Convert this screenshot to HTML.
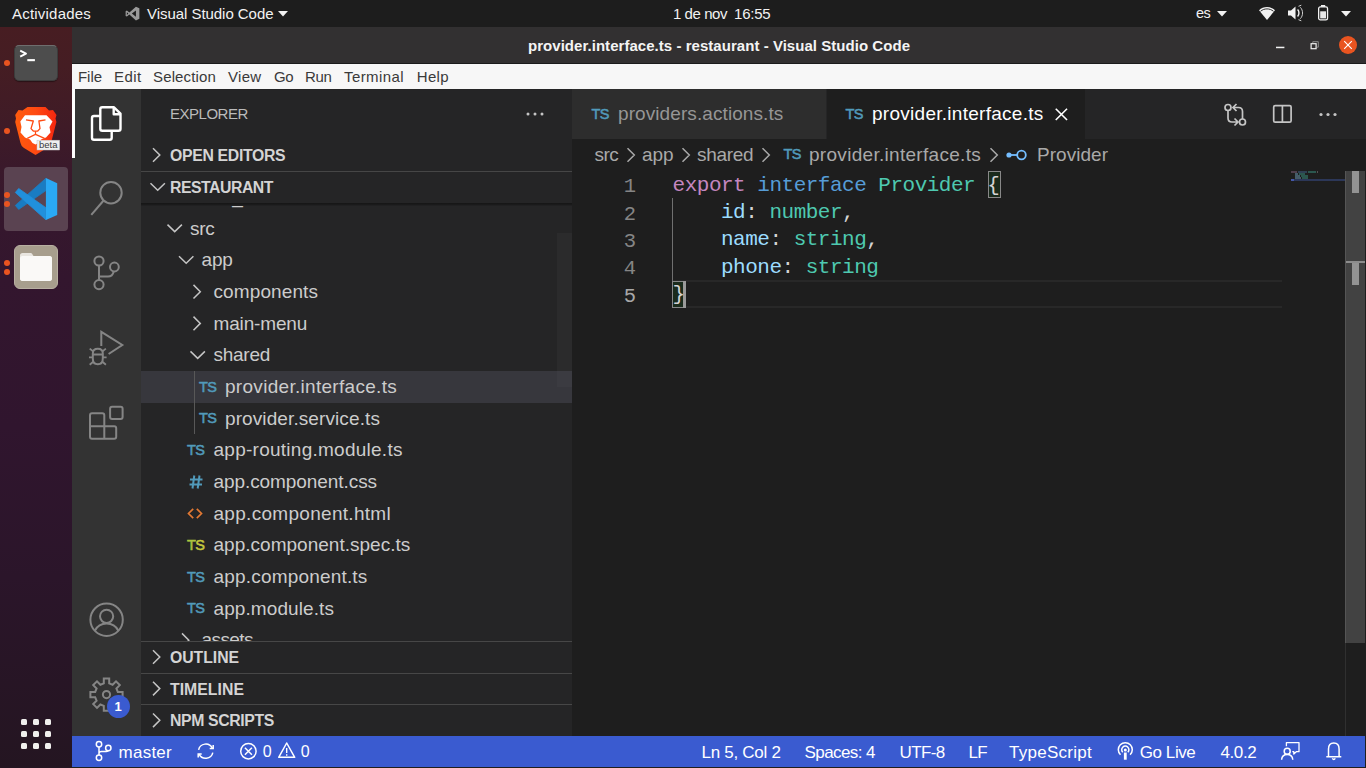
<!DOCTYPE html>
<html>
<head>
<meta charset="utf-8">
<title>provider.interface.ts - restaurant - Visual Studio Code</title>
<style>
*{box-sizing:border-box;margin:0;padding:0}
html,body{width:1366px;height:768px;overflow:hidden;background:#1e1e1e;font-family:"Liberation Sans",sans-serif;}
body{position:relative}
.abs{position:absolute}
.t{position:absolute;white-space:nowrap;line-height:1}
/* top bar */
#topbar{left:0;top:0;width:1366px;height:27px;background:#1d1d1d}
#topbar .t{color:#f2f2f2;font-size:15px;top:6px}
/* dock */
#dock{left:0;top:27px;width:72px;height:741px;background:linear-gradient(180deg,#471d22 0px,#451d23 40px,#3f1b27 100px,#3a192b 140px,#35172d 200px,#33162e 250px,#30152e 400px,#2b152a 550px,#241521 741px)}
.dot{position:absolute;width:6px;height:6px;border-radius:3px;background:#e95420;left:4px}
/* window */
#titlebar{left:72px;top:27px;width:1294px;height:37px;background:#323031;border-bottom:1px solid #1b1b1b}
#titlebar .t{color:#f4f4f4;font-weight:bold;font-size:15px;top:11px}
#menubar{left:72px;top:64px;width:1294px;height:25px;background:#f7f7f7}
#menubar .t{color:#3a3a3a;font-size:15px;top:5px}
#actbar{left:72px;top:89px;width:69px;height:647px;background:#333333}
#sidebar{left:141px;top:89px;width:431px;height:647px;background:#252526;overflow:hidden}
#editor{left:572px;top:89px;width:794px;height:647px;background:#1e1e1e;overflow:hidden}
#status{left:72px;top:736px;width:1293px;height:31px;background:#3a5bd0}
#status .t{color:#ffffff;font-size:17px;top:7.8px}
/* sidebar */
.row{position:absolute;left:0;width:431px;height:32px}
.row .t{color:#cccccc;font-size:19px;top:6px}
.hdr{position:absolute;left:0;width:431px;height:32px;background:#252526;border-top:1px solid #474747}
.hdr .t{color:#d4d4d4;font-weight:bold;font-size:15.8px;left:29px;top:8px}
.ts{position:absolute;font-weight:normal;-webkit-text-stroke:0.55px currentColor;font-size:14.5px;color:#519aba;line-height:1;letter-spacing:-0.5px}
/* code */
.ln{position:absolute;margin-top:2.2px;left:0;width:64px;text-align:right;font-family:"Liberation Mono",monospace;font-size:20.5px;color:#858585;line-height:27.36px;height:27.36px}
.cl{position:absolute;margin-top:0.7px;left:100.6px;font-family:"Liberation Mono",monospace;font-size:21px;line-height:27.36px;height:27.36px;white-space:pre;color:#d4d4d4;letter-spacing:-0.5px}
.k1{color:#c586c0}.k2{color:#569cd6}.k3{color:#4ec9b0}.k4{color:#9cdcfe}
svg{position:absolute;overflow:visible}
</style>
</head>
<body>
<!-- TOPBAR -->
<div id="topbar" class="abs">
  <span class="t" id="tb1" style="left:12px;letter-spacing:0.207px">Actividades</span>
  <svg id="tbvs" style="left:125px;top:6px" width="15" height="15" viewBox="0 0 24 24"><path d="M17.5 1 L23 3.5 V20.5 L17.5 23 L7 13.5 L3 16.8 L1 15.8 V8.2 L3 7.2 L7 10.5 Z M17.5 7 L11 12 L17.5 17 Z M3 9.8 V14.2 L5.4 12 Z" fill="#9a9a9a" fill-rule="evenodd"/></svg>
  <span class="t" id="tb2" style="left:147px;letter-spacing:-0.045px">Visual Studio Code</span>
  <svg style="left:278px;top:10.800px" width="10" height="5.400" viewBox="0 0 10 6" preserveAspectRatio="none"><path d="M0 0H10L5 6Z" fill="#f2f2f2"/></svg>
  <span class="t" id="tb3" style="left:673px;letter-spacing:-0.443px">1 de nov</span><span class="t" id="tb3b" style="left:734px;letter-spacing:-0.209px">16:55</span>
  <span class="t" id="tb4" style="left:1196px;font-size:14.500px;letter-spacing:-0.5px">es</span>
  <svg style="left:1217px;top:10.800px" width="10" height="5.400" viewBox="0 0 10 6" preserveAspectRatio="none"><path d="M0 0H10L5 6Z" fill="#f2f2f2"/></svg>
  <svg style="left:1259px;top:6.600px" width="16" height="13" viewBox="0 0 16 13"><path d="M8 13 L0 3.200 C2.200 1.200 5 0 8 0 C11 0 13.800 1.200 16 3.200 Z" fill="#f2f2f2"/><path d="M1.500 4.300 C3.400 2.700 5.600 1.900 8 1.900 C10.400 1.900 12.600 2.700 14.500 4.300" fill="none" stroke="#1d1d1d" stroke-width="0.900"/></svg>
  <svg style="left:1287.500px;top:5px" width="17" height="16" viewBox="0 0 17 16"><path d="M0 5.500 H3 L7.500 1.500 V14.500 L3 10.500 H0 Z" fill="#f2f2f2"/><path d="M9.600 4.600 C11.400 6.400 11.400 9.600 9.600 11.400" fill="none" stroke="#f2f2f2" stroke-width="1.400"/><path d="M10.500 1.300 L13.300 0.200 M10.500 14.700 L13.300 15.800 M12.300 2.300 C15.300 5.300 15.300 10.700 12.300 13.700" fill="none" stroke="#e0e0e0" stroke-width="0.900"/></svg>
  <svg style="left:1318px;top:4.700px" width="10.200" height="15.500" viewBox="0 0 10.200 15.500"><rect x="3" y="0" width="4.200" height="1.800" fill="#f2f2f2"/><rect x="0.650" y="1.900" width="8.900" height="12.950" rx="1.600" fill="none" stroke="#f2f2f2" stroke-width="1.300"/><rect x="2.200" y="6.300" width="5.800" height="7.100" fill="#e8e8e8"/></svg>
  <svg style="left:1341px;top:10.800px" width="10" height="5.400" viewBox="0 0 10 6" preserveAspectRatio="none"><path d="M0 0H10L5 6Z" fill="#f2f2f2"/></svg>
</div>
<!-- DOCK -->
<div id="dock" class="abs">
  <!-- coordinates inside dock: y = page_y - 27 -->
  <div class="dot" style="top:33px"></div>
  <div class="abs" style="left:14px;top:18px;width:44px;height:36px;border-radius:5px;background:#4d4d4d;border:1px solid #3c3c3c;border-top-color:#6e6e6e;box-shadow:0 1px 1px rgba(0,0,0,.4)"></div>
  <svg style="left:14px;top:18px" width="44" height="36" viewBox="0 0 44 36"><path d="M6.200 5.600 L12 8.600 L6.200 11.600" fill="none" stroke="#ffffff" stroke-width="1.900" stroke-linejoin="round"/><rect x="13.300" y="14.100" width="7.600" height="2.100" fill="#ffffff"/></svg>
  <div class="dot" style="top:101px"></div>
  <svg id="brave" style="left:0;top:73px" width="72" height="60" viewBox="0 100 72 60">
    <defs><linearGradient id="bg1" x1="0" y1="0" x2="1" y2="0"><stop offset="0" stop-color="#ff5c0d"/><stop offset="0.5" stop-color="#ff4a12"/><stop offset="1" stop-color="#f5260f"/></linearGradient></defs>
    <path d="M27.500 107 H45.500 L49 110.500 L53 110 L56.500 115 L55.500 118.500 L56.400 122 L51 143 Q50 146 47 148 L35.500 155 L24 148 Q21 146 20.500 143 L15.200 122 L16 118.500 L15.200 115 L18.500 110 L22.500 110.500 Z" fill="url(#bg1)"/>
    <path d="M25 115.300 H46.500 L52.500 121.500 L49.500 127 L50.500 132.500 L46 137.500 L41 139.500 L38.500 143 L35.500 144.600 L32.500 143 L30 139.500 L25 137.500 L20.500 132.500 L21.500 127 L20.300 121.500 Z" fill="#ffffff"/>
    <path d="M26 119.800 L33.300 121 L31 128.600 L33.500 131.200 H37.500 L40 128.600 L38.900 121 L45.500 119.800" fill="none" stroke="#ff4a12" stroke-width="1.300" stroke-linejoin="round"/>
    <path d="M35.500 131.200 V134.400 L27.300 138.300 M35.500 134.400 L44.500 138.300" fill="none" stroke="#ff4a12" stroke-width="1.300"/>
    <rect x="37" y="140.200" width="22.600" height="9.800" fill="#efefef" stroke="#c4c4c4" stroke-width="0.500"/>
    <text x="48.300" y="148" font-family="Liberation Sans, sans-serif" font-size="8.800" text-anchor="middle" fill="#3a3a3a" textLength="18.500" lengthAdjust="spacingAndGlyphs">beta</text>
  </svg>
  <div class="abs" style="left:4px;top:140px;width:64px;height:64px;border-radius:4px;background:#5a4351"></div>
  <div class="dot" style="top:164.5px"></div><div class="dot" style="top:173.5px"></div>
  <svg id="vslogo" style="left:0;top:137px" width="72" height="72" viewBox="0 164 72 72" stroke-linejoin="round">
    <path d="M15.300 205.400 L18.700 209.400 L45.900 190.600 V178.300 Z" fill="#1a7cc2" stroke="#1a7cc2" stroke-width="0.800"/>
    <path d="M15.300 192.500 L18.700 188.500 L45.900 207.700 V219.800 Z" fill="#2190dc" stroke="#2190dc" stroke-width="0.800"/>
    <path d="M45.900 178.100 L57.200 183.200 V215.100 L45.900 220 Z" fill="#2aa9f5"/>
  </svg>
  <div class="dot" style="top:232.5px"></div><div class="dot" style="top:241.5px"></div>
  <div class="abs" style="left:14px;top:218px;width:44px;height:44px;border-radius:6px;background:#a79e8d;border:1px solid #b8b0a2"></div>
  <svg style="left:14px;top:218px" width="44" height="44" viewBox="0 0 44 44"><path d="M6 10.500 C6 9 7 8 8.500 8 H16.500 C17.500 8 18 8.500 18.500 9.500 L19.500 11 H35.500 C37 11 38 12 38 13.500 V33.500 C38 35 37 36 35.500 36 H8.500 C7 36 6 35 6 33.500 Z" fill="#e9e6e0"/><path d="M6 13.500 C6 12 7 11 8.500 11 H35.500 C37 11 38 12 38 13.500 V33.500 C38 35 37 36 35.500 36 H8.500 C7 36 6 35 6 33.500 Z" fill="#faf9f7"/></svg>
  <svg style="left:21px;top:692px" width="30" height="30" viewBox="0 0 30 30"><g fill="#f0efed"><rect x="0" y="0" width="6" height="6" rx="1.500"/><rect x="12" y="0" width="6" height="6" rx="1.500"/><rect x="24" y="0" width="6" height="6" rx="1.500"/><rect x="0" y="12" width="6" height="6" rx="1.500"/><rect x="12" y="12" width="6" height="6" rx="1.500"/><rect x="24" y="12" width="6" height="6" rx="1.500"/><rect x="0" y="24" width="6" height="6" rx="1.500"/><rect x="12" y="24" width="6" height="6" rx="1.500"/><rect x="24" y="24" width="6" height="6" rx="1.500"/></g></svg>
</div>
<!-- TITLEBAR -->
<div id="titlebar" class="abs">
  <span class="t" id="ttl" style="left:456px;letter-spacing:0.040px">provider.interface.ts - restaurant - Visual Studio Code</span>
  <svg style="left:1204px;top:19px" width="8.400" height="3" viewBox="0 0 8.400 3"><rect width="8.400" height="1.500" y="0.700" fill="#f2f2f2"/></svg>
  <svg style="left:1237.500px;top:14px" width="9" height="9" viewBox="0 0 9 9"><path d="M2.800 2 V0.700 H8.300 V6.200 H7" fill="none" stroke="#8a8a8a" stroke-width="1"/><rect x="1.100" y="2.700" width="5" height="5" fill="none" stroke="#f2f2f2" stroke-width="1.200"/></svg>
  <div class="abs" style="left:1266.700px;top:8.600px;width:18.600px;height:18.600px;border-radius:9.300px;background:#e95420"></div>
  <svg style="left:1272px;top:14px" width="8" height="8" viewBox="0 0 8 8"><path d="M0.200 0.200 L7.800 7.800 M7.800 0.200 L0.200 7.800" stroke="#ffffff" stroke-width="1.150" fill="none"/></svg>
</div>
<!-- MENUBAR -->
<div id="menubar" class="abs">
  <span class="t" id="m1" style="left:6px;letter-spacing:-0.043px">File</span>
  <span class="t" id="m2" style="left:42px;letter-spacing:0.410px">Edit</span>
  <span class="t" id="m3" style="left:81px;letter-spacing:0.142px">Selection</span>
  <span class="t" id="m4" style="left:156px;letter-spacing:0.312px">View</span>
  <span class="t" id="m5" style="left:202px;letter-spacing:-0.508px">Go</span>
  <span class="t" id="m6" style="left:233px;letter-spacing:-0.344px">Run</span>
  <span class="t" id="m7" style="left:272px;letter-spacing:0.414px">Terminal</span>
  <span class="t" id="m8" style="left:344.800px;letter-spacing:0.285px">Help</span>
</div>
<!-- ACTIVITY BAR -->
<div id="actbar" class="abs">
  <div class="abs" style="left:0;top:0;width:3px;height:69px;background:#ffffff"></div>
  <svg style="left:0;top:0" width="69" height="647" viewBox="72 89 69 647" fill="none" stroke-linejoin="round" stroke-linecap="butt">
    <!-- files -->
    <g stroke="#ffffff" stroke-width="2.400">
      <path d="M114 107.300 H102.300 Q100.300 107.300 100.300 109.300 V128.700 Q100.300 130.700 102.300 130.700 H118.500 Q120.500 130.700 120.500 128.700 V113.600 Z"/>
      <path d="M113.700 107.300 V114.200 H120.500"/>
      <path d="M100.300 116 H94 Q92 116 92 118 V137.700 Q92 139.700 94 139.700 H109.700 Q111.700 139.700 111.700 137.700 V130.700"/>
    </g>
    <!-- search -->
    <g stroke="#858585" stroke-width="2">
      <circle cx="111" cy="192.700" r="10.700"/>
      <path d="M103.600 200.500 L91.300 214.800"/>
    </g>
    <!-- scm -->
    <g stroke="#858585" stroke-width="2">
      <circle cx="99" cy="261" r="4.600"/>
      <circle cx="99" cy="284.600" r="4.600"/>
      <circle cx="114.400" cy="267" r="4.400"/>
      <path d="M99 265.600 V280"/>
      <path d="M99 276.500 H108 Q112.500 276.500 113.700 271.400"/>
    </g>
    <!-- debug -->
    <g stroke="#858585" stroke-width="2" stroke-linejoin="miter">
      <path d="M101.300 346 V331.800 L122.300 345 L108.600 354"/>
      <path d="M92.800 353.500 Q92.800 348.800 97.800 348.800 Q102.800 348.800 102.800 353.500 V358.500 Q102.800 364.300 97.800 364.300 Q92.800 364.300 92.800 358.500 Z" stroke-width="2"/>
      <path d="M92.800 354.500 H102.800 M89 357.300 H92.800 M102.800 357.300 H106.600 M93.300 351.500 L89.700 348.600 M102.300 351.500 L105.900 348.600 M93.500 361.500 L89.700 364.800 M102.100 361.500 L105.900 364.800" stroke-width="1.800"/>
    </g>
    <!-- extensions -->
    <g stroke="#858585" stroke-width="2">
      <path d="M92 413.300 H102.300 Q104.300 413.300 104.300 415.300 V426.300 H114.200 Q116.200 426.300 116.200 428.300 V436.700 Q116.200 438.700 114.200 438.700 H92 Q90 438.700 90 436.700 V415.300 Q90 413.300 92 413.300 Z"/>
      <path d="M90 426.300 H104.300 V438.700"/>
      <rect x="110.100" y="406.800" width="12.500" height="12.200" rx="2"/>
    </g>
    <!-- account -->
    <g stroke="#858585" stroke-width="2">
      <circle cx="106.600" cy="619.700" r="16.200"/>
      <circle cx="106.600" cy="616.300" r="6.600"/>
      <path d="M94.800 630.800 Q98.500 623.600 106.600 623.600 Q114.700 623.600 118.400 630.800"/>
    </g>
    <!-- gear -->
    <g stroke="#858585" stroke-width="2" stroke-linejoin="miter">
      <path d="M103.8 683.3 L103.8 678.5 L109.2 678.5 L109.2 683.3 L112.6 684.7 L116.0 681.3 L119.8 685.1 L116.4 688.5 L117.8 691.9 L122.6 691.9 L122.6 697.3 L117.8 697.3 L116.4 700.7 L119.8 704.1 L116.0 707.9 L112.6 704.5 L109.2 705.9 L109.2 710.7 L103.8 710.7 L103.8 705.9 L100.4 704.5 L97.0 707.9 L93.2 704.1 L96.6 700.7 L95.2 697.3 L90.4 697.3 L90.4 691.9 L95.2 691.9 L96.6 688.5 L93.2 685.1 L97.0 681.3 L100.4 684.7 Z"/>
      <circle cx="106.500" cy="694.600" r="3.600"/>
    </g>
  </svg>
  <div class="abs" style="left:35px;top:606px;width:23px;height:23px;border-radius:12px;background:#3a5bd0"></div>
  <span class="t" id="bdg" style="left:42.500px;top:610.500px;font-size:13px;font-weight:bold;color:#fff">1</span>
</div>
<!-- SIDEBAR -->
<div id="sidebar" class="abs">
  <!-- tree (scrolled) -->
  <div class="row" style="top:91.820px"><span class="t" style="left:49px">node_modules</span></div>
  <div class="row" style="top:123.50px"><span class="t" id="r0" style="left:49.0px;letter-spacing:-0.343px">src</span></div>
  <div class="row" style="top:155.18px"><span class="t" id="r1" style="left:60.5px;letter-spacing:-0.134px">app</span></div>
  <div class="row" style="top:186.86px"><span class="t" id="r2" style="left:72.5px;letter-spacing:0.108px">components</span></div>
  <div class="row" style="top:218.54px"><span class="t" id="r3" style="left:72.5px;letter-spacing:-0.150px">main-menu</span></div>
  <div class="row" style="top:250.22px"><span class="t" id="r4" style="left:72.5px;letter-spacing:-0.268px">shared</span></div>
  <div class="row" style="top:281.90px;background:#37373d"><span class="ts" style="left:58.0px;top:8.800px">TS</span><span class="t" id="r5" style="left:84.0px;letter-spacing:0.295px">provider.interface.ts</span></div>
  <div class="row" style="top:313.58px"><span class="ts" style="left:58.0px;top:8.800px">TS</span><span class="t" id="r6" style="left:84.0px;letter-spacing:0.099px">provider.service.ts</span></div>
  <div class="row" style="top:345.26px"><span class="ts" style="left:46.0px;top:8.800px">TS</span><span class="t" id="r7" style="left:72.5px;letter-spacing:0.258px">app-routing.module.ts</span></div>
  <div class="row" style="top:376.94px"><svg style="left:47.500px;top:9.500px" width="14" height="14" viewBox="0 0 14 14" fill="none" stroke="#519aba" stroke-width="2"><path d="M5.300 0.500 L3.500 13.500 M10.500 0.500 L8.700 13.500 M1 4.600 H13.500 M0.500 9.400 H13"/></svg><span class="t" id="r8" style="left:72.5px;letter-spacing:-0.074px">app.component.css</span></div>
  <div class="row" style="top:408.62px"><svg style="left:46.0px;top:10px" width="16" height="11" viewBox="0 0 16 11" fill="none" stroke="#e37933" stroke-width="1.700"><path d="M6.200 0.800 L1.500 5.500 L6.200 10.200 M9.800 0.800 L14.500 5.500 L9.800 10.200"/></svg><span class="t" id="r9" style="left:72.5px;letter-spacing:0.296px">app.component.html</span></div>
  <div class="row" style="top:440.30px"><span class="ts" style="left:46.0px;top:8.800px;color:#c4c83e"><span style="color:#a9c43f">T</span>S</span><span class="t" id="r10" style="left:72.5px;letter-spacing:0.016px">app.component.spec.ts</span></div>
  <div class="row" style="top:471.98px"><span class="ts" style="left:46.0px;top:8.800px">TS</span><span class="t" id="r11" style="left:72.5px;letter-spacing:0.185px">app.component.ts</span></div>
  <div class="row" style="top:503.66px"><span class="ts" style="left:46.0px;top:8.800px">TS</span><span class="t" id="r12" style="left:72.5px;letter-spacing:0.095px">app.module.ts</span></div>
  <div class="row" style="top:535.34px"><span class="t" id="r13" style="left:60.5px;letter-spacing:-0.570px">assets</span></div>
  <div class="abs" style="left:53px;top:282px;width:1px;height:63px;background:#585858"></div>
  <svg style="left:0;top:0" width="431" height="647" fill="none" stroke="#c5c5c5" stroke-width="1.500"><path d="M26.5 135.6 l7.2 7 l7.2 -7"/><path d="M38.0 167.3 l7.2 7 l7.2 -7"/><path d="M52.5 195.9 l6.8 6.8 l-6.800 6.800"/><path d="M52.5 227.6 l6.8 6.8 l-6.800 6.800"/><path d="M49.5 262.4 l7.2 7 l7.2 -7"/><path d="M41.0 544.4 l6.8 6.8 l-6.800 6.800"/></svg>
  <div class="abs" style="left:416px;top:144px;width:15px;height:154px;background:rgba(121,121,121,0.08)"></div>
  <!-- title -->
  <div class="abs" style="left:0;top:0;width:431px;height:50px;background:#252526"></div>
  <span class="t" id="sx" style="left:29px;top:17px;font-size:15px;color:#bbbbbb;letter-spacing:-0.488px">EXPLORER</span>
  <svg style="left:385px;top:23px" width="18" height="4" viewBox="0 0 18 4" fill="#c5c5c5"><circle cx="2" cy="2" r="1.500"/><circle cx="9" cy="2" r="1.500"/><circle cx="16" cy="2" r="1.500"/></svg>
  <!-- headers -->
  <div class="hdr" style="top:50px;border-top:none"><span class="t" id="h1" style="top:9px;letter-spacing:-0.316px">OPEN EDITORS</span></div>
  <div class="abs" style="left:0;top:113.500px;width:431px;height:3.500px;background:linear-gradient(180deg,#151515,#1c1c1d 70%,#252526)"></div><div class="hdr" style="top:82px;height:31.700px;border-top:1.400px solid #464646"><span class="t" id="h2" style="letter-spacing:-0.466px">RESTAURANT</span></div>
  <div class="hdr" style="top:552px"><span class="t" id="h3" style="letter-spacing:-0.047px">OUTLINE</span></div>
  <div class="hdr" style="top:583.600px"><span class="t" id="h4" style="letter-spacing:0.035px">TIMELINE</span></div>
  <div class="hdr" style="top:615px"><span class="t" id="h5" style="letter-spacing:-0.361px">NPM SCRIPTS</span></div>
  <svg style="left:0;top:0" width="431" height="647" fill="none" stroke="#c5c5c5" stroke-width="1.500">
    <path d="M12 59.200 l6.800 6.800 l-6.800 6.800"/>
    <path d="M9.500 94.300 l7.200 7 l7.200 -7"/>
    <path d="M12 561.200 l6.800 6.800 l-6.800 6.800"/>
    <path d="M12 592.800 l6.800 6.800 l-6.800 6.800"/>
    <path d="M12 624.500 l6.800 6.800 l-6.800 6.800"/>
  </svg>
</div>
<!-- EDITOR -->
<div id="editor" class="abs">
  <!-- tabs -->
  <div class="abs" style="left:0;top:0;width:794px;height:50px;background:#252526"></div>
  <div class="abs" style="left:0;top:0;width:254px;height:50px;background:#2d2d2d"></div>
  <div class="abs" style="left:255px;top:0;width:258px;height:50px;background:#1e1e1e"></div>
  <span class="ts" style="left:19.500px;top:18px;font-size:14.500px">TS</span>
  <span class="t" id="t1" style="left:46px;top:15px;font-size:19px;color:#969696;letter-spacing:0.086px">providers.actions.ts</span>
  <span class="ts" style="left:273.500px;top:18px;font-size:14.500px">TS</span>
  <span class="t" id="t2" style="left:300px;top:15px;font-size:19px;color:#ffffff;letter-spacing:0.271px">provider.interface.ts</span>
  <svg style="left:483px;top:18.800px" width="12.800" height="12.800" viewBox="0 0 12 12"><path d="M0.700 0.700 L11.300 11.300 M11.300 0.700 L0.700 11.300" stroke="#ffffff" stroke-width="1.500" fill="none"/></svg>
  <!-- editor actions (page coords via viewBox) -->
  <svg style="left:0;top:0" width="794" height="50" viewBox="572 89 794 50" fill="none" stroke="#c5c5c5" stroke-width="1.700">
    <circle cx="1228" cy="107.500" r="3"/><circle cx="1242.500" cy="122" r="3"/>
    <path d="M1228 110.500 V118 Q1228 122 1232 122 H1237.500 M1234.500 118.500 L1238 122 L1234.500 125.500"/>
    <path d="M1242.500 119 V111.500 Q1242.500 107.500 1238.500 107.500 H1233.500 M1236.500 104 L1233 107.500 L1236.500 111"/>
    <rect x="1273.700" y="105.600" width="17.400" height="16.600" rx="1.500"/><path d="M1282.400 105.600 V122.200"/>
    <g fill="#c5c5c5" stroke="none"><circle cx="1321" cy="114.500" r="1.600"/><circle cx="1328" cy="114.500" r="1.600"/><circle cx="1335" cy="114.500" r="1.600"/></g>
  </svg>
  <!-- breadcrumbs -->
  <div id="bc" class="abs" style="left:0;top:50px;width:794px;height:32px;">
    <span class="t" id="b1" style="left:22.500px;top:6px;font-size:19px;color:#a9a9a9;letter-spacing:-0.509px">src</span>
    <span class="t" id="b2" style="left:70px;top:6px;font-size:19px;color:#a9a9a9;letter-spacing:-0.068px">app</span>
    <span class="t" id="b3" style="left:125px;top:6px;font-size:19px;color:#a9a9a9;letter-spacing:-0.285px">shared</span>
    <span class="ts" style="left:211.500px;top:8px;font-size:14.500px">TS</span>
    <span class="t" id="b4" style="left:237px;top:6px;font-size:19px;color:#a9a9a9;letter-spacing:0.295px">provider.interface.ts</span>
    <span class="t" id="b5" style="left:465px;top:6px;font-size:19px;color:#a9a9a9;letter-spacing:0.031px">Provider</span>
    <svg style="left:0;top:0" width="794" height="32" viewBox="572 139 794 32" fill="none" stroke="#a9a9a9" stroke-width="1.500">
      <path d="M627.500 148.200 l6.800 6.800 l-6.800 6.800 M682.500 148.200 l6.800 6.800 l-6.800 6.800 M762.500 148.200 l6.800 6.800 l-6.800 6.800 M990.500 148.200 l6.800 6.800 l-6.800 6.800"/>
      <g stroke="#75beff" stroke-width="1.800"><circle cx="1021.500" cy="155" r="4.300"/><path d="M1010 155 H1017.200"/></g>
      <circle cx="1009" cy="155" r="2.600" fill="#75beff" stroke="none"/>
    </svg>
  </div>
  <!-- code -->
  <div class="abs" style="left:101px;top:191.440px;width:609px;height:27.360px;border-top:2.880px solid #282828;border-bottom:2.880px solid #282828"></div>
  <div class="abs" style="left:100px;top:109px;width:1px;height:83px;background:#707070"></div>
  <div class="abs" style="left:416px;top:82px;width:13px;height:27px;background:#1a2b1c;border:1px solid #888888"></div>
  <div class="abs" style="left:100px;top:191.500px;width:14px;height:27.500px;background:#1a2b1c;border:1px solid #888888"></div>
  <div class="abs" style="left:111px;top:192px;width:3px;height:27px;background:#9a9a9a"></div>
  <div class="ln" style="top:82.00px;color:#858585">1</div><div class="cl" id="c1" style="top:82.00px"><span class="k1">export</span> <span class="k2">interface</span> <span class="k3">Provider</span> {</div>
  <div class="ln" style="top:109.36px;color:#858585">2</div><div class="cl" id="c2" style="top:109.36px">    <span class="k4">id</span>: <span class="k3">number</span>,</div>
  <div class="ln" style="top:136.72px;color:#858585">3</div><div class="cl" id="c3" style="top:136.72px">    <span class="k4">name</span>: <span class="k3">string</span>,</div>
  <div class="ln" style="top:164.08px;color:#858585">4</div><div class="cl" id="c4" style="top:164.08px">    <span class="k4">phone</span>: <span class="k3">string</span></div>
  <div class="ln" style="top:191.44px;color:#a8a8a8">5</div><div class="cl" id="c5" style="top:191.44px">}</div>
  <!-- minimap -->
  <svg style="left:0;top:0" width="794" height="647" viewBox="572 89 794 647" shape-rendering="crispEdges">
    <g opacity="0.5">
    <rect x="1291" y="171" width="6" height="2" fill="#80607c"/><rect x="1298" y="171" width="9" height="2" fill="#3f628a"/><rect x="1308" y="171" width="8" height="2" fill="#389080"/><rect x="1317" y="171" width="1" height="2" fill="#8a8a8a"/>
    <rect x="1295" y="173" width="3" height="2" fill="#6d9ab5"/><rect x="1299" y="173" width="6" height="2" fill="#389080"/>
    <rect x="1295" y="175" width="5" height="2" fill="#6d9ab5"/><rect x="1301" y="175" width="7" height="2" fill="#389080"/>
    <rect x="1295" y="177" width="6" height="2" fill="#6d9ab5"/><rect x="1302" y="177" width="6" height="2" fill="#389080"/>
    </g>
    <rect x="1291" y="179" width="54" height="2" fill="#2c3758"/><rect x="1291" y="179" width="3" height="2" fill="#4558a8"/>
    <!-- scrollbar -->
    <rect x="1345" y="171" width="1" height="565" fill="#303030"/>
    <rect x="1345" y="171" width="20" height="472" fill="#424242"/>
    <rect x="1345" y="171" width="1" height="472" fill="#555555"/>
    <rect x="1352" y="171" width="7" height="22" fill="#939393"/>
    <rect x="1346" y="261" width="19" height="2" fill="#8c8c8c"/>
    <rect x="1352" y="263" width="7" height="22" fill="#939393"/>
  </svg>
</div>
<!-- STATUS -->
<div id="status" class="abs">
  <span class="t" id="s1" style="left:46.500px;letter-spacing:0.255px">master</span>
  <span class="t" id="s2" style="left:190.700px;font-size:16px">0</span>
  <span class="t" id="s3" style="left:228.700px;font-size:16px">0</span>
  <span class="t" id="s4" style="left:629.600px;letter-spacing:-0.294px">Ln 5, Col 2</span>
  <span class="t" id="s5" style="left:732.600px;letter-spacing:-0.590px">Spaces: 4</span>
  <span class="t" id="s6" style="left:827.500px;letter-spacing:-0.594px">UTF-8</span>
  <span class="t" id="s7" style="left:896.500px;letter-spacing:-0.6px">LF</span>
  <span class="t" id="s8" style="left:937px;letter-spacing:0.269px">TypeScript</span>
  <span class="t" id="s9" style="left:1067.800px;letter-spacing:-0.442px">Go Live</span>
  <span class="t" id="s10" style="left:1148.400px;letter-spacing:-0.362px">4.0.2</span>
  <svg style="left:0;top:0" width="1293" height="31" viewBox="72 736 1293 31" fill="none" stroke="#ffffff" stroke-width="1.500" stroke-linejoin="round">
    <!-- branch -->
    <circle cx="99" cy="744.300" r="2.700"/><circle cx="99" cy="757.800" r="2.700"/><circle cx="108.300" cy="748" r="2.700"/>
    <path d="M99 747 V755.100 M99 753.500 Q99 751.500 101.500 751.500 H104.500 Q107.800 751.500 108.200 750.700"/>
    <!-- sync -->
    <path d="M198.600 749.800 A7.300 7.300 0 0 1 212.300 748.200 M212.800 752.600 A7.300 7.300 0 0 1 199.100 754.200"/>
    <path d="M213.200 745 V748.500 H209.700 M198.200 757.400 V753.900 H201.700" stroke-linejoin="miter"/>
    <!-- error -->
    <circle cx="248.400" cy="751.200" r="7.700"/><path d="M244.900 747.700 L251.900 754.700 M251.900 747.700 L244.900 754.700"/>
    <!-- warning -->
    <path d="M286.700 743 L294.700 757.300 H278.700 Z"/><path d="M286.700 748 V753 M286.700 754.300 V755.800" stroke-width="1.400"/>
    <!-- go live -->
    <path d="M1120.500 754.800 A7 7 0 1 1 1130.100 754.800" /><path d="M1122.800 752.300 A3.600 3.600 0 1 1 1127.800 752.300"/>
    <circle cx="1125.300" cy="750" r="1.500" fill="#fff" stroke="none"/><path d="M1125.300 752.500 V759.700" stroke-width="2.800"/>
    <!-- feedback -->
    <circle cx="1287.200" cy="751.300" r="3"/><path d="M1281.600 759.800 Q1282 754.600 1287.200 754.600 Q1292.400 754.600 1292.800 759.800"/>
    <path d="M1286.400 746.200 V742.600 H1299 V751.700 H1296.300 L1293.800 754 V751.700 H1292.300" stroke-width="1.300"/>
    <!-- bell -->
    <path d="M1328.500 756.800 V749 Q1328.500 743 1333.800 743 Q1339.100 743 1339.100 749 V756.800 M1326.300 756.800 H1341.300 M1332.300 758.300 Q1333.800 760.500 1335.300 758.300"/>
  </svg>
</div>
</body>
</html>
